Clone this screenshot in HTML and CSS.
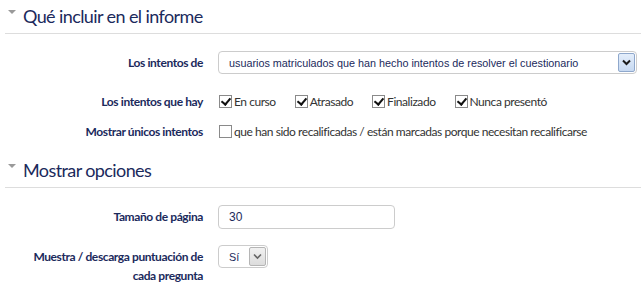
FILE: index.html
```html
<!DOCTYPE html>
<html lang="es">
<head>
    <meta charset="UTF-8">
    <title>Informe</title>
    <link rel="stylesheet" href="styles.css">
</head>
<body>
    <div class="section">
        <h2 class="section-title"><span class="caret"></span>Qué incluir en el informe</h2>
        <div class="form-row row-wide">
            <label class="form-label">Los intentos de</label>
            <div class="form-field">
                <div class="select select-wide">
                    <span class="select-text">usuarios matriculados que han hecho intentos de resolver el cuestionario</span>
                    <span class="select-btn blue"><svg width="9" height="7" viewBox="0 0 9 7"><path d="M1 1.5 L4.5 5 L8 1.5" fill="none" stroke="#1a1a1a" stroke-width="2"/></svg></span>
                </div>
            </div>
        </div>
        <div class="form-row">
            <label class="form-label">Los intentos que hay</label>
            <div class="form-field checks">
                <label class="check"><span class="box checked"></span>En curso</label>
                <label class="check"><span class="box checked"></span>Atrasado</label>
                <label class="check"><span class="box checked"></span>Finalizado</label>
                <label class="check"><span class="box checked"></span>Nunca presentó</label>
            </div>
        </div>
        <div class="form-row">
            <label class="form-label">Mostrar únicos intentos</label>
            <div class="form-field checks">
                <label class="check"><span class="box"></span>que han sido recalificadas / están marcadas porque necesitan recalificarse</label>
            </div>
        </div>
    </div>

    <div class="section">
        <h2 class="section-title"><span class="caret"></span>Mostrar opciones</h2>
        <div class="form-row row-wide">
            <label class="form-label">Tamaño de página</label>
            <div class="form-field">
                <div class="text-input">30</div>
            </div>
        </div>
        <div class="form-row">
            <label class="form-label">Muestra / descarga puntuación de cada pregunta</label>
            <div class="form-field">
                <div class="select select-small">
                    <span class="select-text">Sí</span>
                    <span class="select-btn gray"><svg width="9" height="7" viewBox="0 0 9 7"><path d="M1 1.5 L4.5 5 L8 1.5" fill="none" stroke="#666" stroke-width="1.6"/></svg></span>
                </div>
            </div>
        </div>
    </div>
</body>
</html>
```

FILE: styles.css
```css
* {
    margin: 0;
    padding: 0;
    box-sizing: border-box;
}
body {
    font-family: Lato, "Open Sans", sans-serif;
    background-color: #fff;
    color: #333;
    width: 641px;
    height: 284px;
    overflow: hidden;
}
.section {
    padding-left: 5px;
    margin-bottom: 11px;
}
.section-title {
    display: flex;
    align-items: center;
    font-size: 18px;
    letter-spacing: -0.6px;
    font-weight: normal;
    color: #1b2a5c;
    height: 34px;
    padding-left: 3px;
    padding-bottom: 1px;
    border-bottom: 1px solid #ddd;
    margin-bottom: 17px;
}
.caret {
    width: 0;
    height: 0;
    border-left: 4px solid transparent;
    border-right: 4px solid transparent;
    border-top: 4px solid #9a9a9a;
    margin-right: 7px;
    margin-top: -8px;
}
.form-row {
    display: flex;
    align-items: flex-start;
    margin-bottom: 7px;
}
.form-row.row-wide {
    margin-bottom: 16px;
}
.form-label {
    flex-shrink: 0;
    width: 198px;
    text-align: right;
    font-weight: bold;
    font-size: 12px;
    letter-spacing: -0.4px;
    line-height: 19px;
    color: #1b2a5c;
    padding-top: 2px;
    padding-left: 22px;
}
.form-field {
    margin-left: 15px;
    min-height: 23px;
}
.select {
    display: flex;
    align-items: center;
    height: 23px;
    border: 1px solid #ccc;
    border-radius: 4px;
    background: #fff;
    padding: 1px;
    font-family: "Liberation Sans", Arial, sans-serif;
    font-size: 10.8px;
    color: #1b2a5c;
}
.select-wide {
    width: 419px;
}
.select-small {
    width: 50px;
}
.select-text {
    flex: 1;
    padding-left: 9px;
    white-space: nowrap;
    overflow: hidden;
}
.select-btn {
    display: flex;
    align-items: center;
    justify-content: center;
    width: 17px;
    height: 19px;
    border-radius: 2px;
}
.select-btn.blue {
    background: linear-gradient(#e4eefb, #c7d9f1);
    border: 1px solid #8fa8cc;
}
.select-btn.gray {
    background: linear-gradient(#f1f1f1, #dcdcdc);
    border: 1px solid #b5b5b5;
}
.checks {
    display: flex;
    align-items: center;
    height: 23px;
    gap: 18px;
}
.check {
    display: flex;
    align-items: center;
    font-size: 12px;
    letter-spacing: -0.45px;
    color: #333;
    line-height: 16px;
    white-space: nowrap;
}
.box {
    width: 13px;
    height: 13px;
    border: 1px solid #8a8a8a;
    background: #fff;
    margin-right: 2px;
    margin-left: 1px;
    position: relative;
}
.box.checked::after {
    content: "";
    position: absolute;
    left: 3px;
    top: 0px;
    width: 4px;
    height: 7px;
    border-right: 2px solid #111;
    border-bottom: 2px solid #111;
    transform: rotate(40deg);
}
.text-input {
    width: 177px;
    height: 24px;
    border: 1px solid #ccc;
    border-radius: 4px;
    padding-left: 10px;
    font-family: "Liberation Sans", Arial, sans-serif;
    font-size: 12px;
    line-height: 22px;
    color: #1b2a5c;
}
```
